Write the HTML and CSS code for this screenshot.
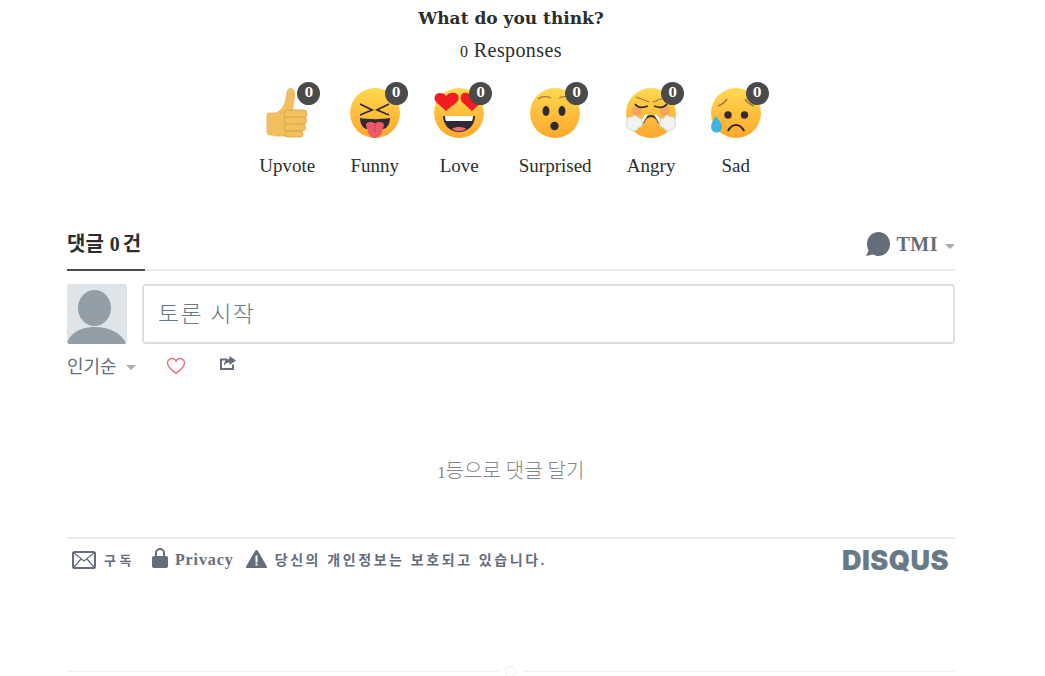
FILE: index.html
```html
<!DOCTYPE html>
<html lang="ko">
<head>
  <meta charset="UTF-8">
  <meta name="viewport" content="width=device-width, initial-scale=1.0">
  <title>Disqus</title>
  <link rel="stylesheet" href="styles.css">
</head>
<body>
  <div class="wrap">
    <h2 class="title">What do you think?</h2>
    <p class="responses"><span class="num">0</span> Responses</p>

    <ul class="reactions">
      <li class="reaction">
        <div class="emoji">
          <svg viewBox="0 0 50 50" width="50" height="50">
            <defs>
              <linearGradient id="face" x1="0" y1="0" x2="0" y2="1">
                <stop offset="0" stop-color="#ffd84f"/>
                <stop offset="1" stop-color="#fda72c"/>
              </linearGradient>
            </defs>
            <path d="M6 25h8c5-2 9-8 10-14l1-7c.5-3 2.500-4 4.500-3.500 2.500 1 3.500 3.500 3 7.500l-2 14-2 26H14c-2 0-3-1-4-1H8c-2 0-3-1-3-3V27c0-1 0-2 1-2z" fill="#f2bf5f" stroke="#e8b458" stroke-width=".8"/>
            <rect x="22" y="22" width="23" height="8" rx="3.500" fill="#f2bf5f" stroke="#d99f45" stroke-width=".8"/>
            <rect x="22" y="29" width="22.500" height="7.500" rx="3.500" fill="#f2bf5f" stroke="#d99f45" stroke-width=".8"/>
            <rect x="22" y="36" width="21.500" height="7" rx="3.500" fill="#f2bf5f" stroke="#d99f45" stroke-width=".8"/>
            <rect x="23" y="43" width="18" height="6" rx="3" fill="#f2bf5f" stroke="#d99f45" stroke-width=".8"/>
          </svg>
          <span class="badge">0</span>
        </div>
        <span class="label">Upvote</span>
      </li>
      <li class="reaction">
        <div class="emoji">
          <svg viewBox="0 0 50 50" width="50" height="50">
            <circle cx="25" cy="25" r="25" fill="url(#face)"/>
            <path d="M10 16l12 6-12 5M39 16l-12 6 12 5" fill="none" stroke="#2f2a33" stroke-width="1.800"/>
            <path d="M10 30c8 1.500 22 1.500 30 0 0 5-2 9-6 11H16c-4-2-6-6-6-11z" fill="#2f2a33"/>
            <path d="M16 37c0-2 2-3 4-3 2 0 4 .5 5 1.500 1-1 3-1.500 5-1.500 2 0 4 1 4 3l-2 7c-1 3.500-4 6-7 6s-6-2.500-7-6z" fill="#ef5a6a"/>
            <path d="M25 36v8" stroke="#c93f50" stroke-width="1"/>
          </svg>
          <span class="badge">0</span>
        </div>
        <span class="label">Funny</span>
      </li>
      <li class="reaction">
        <div class="emoji">
          <svg viewBox="0 0 50 50" width="50" height="50">
            <circle cx="25" cy="25" r="25" fill="url(#face)"/>
            <path d="M9 28h32c0 9-7 16-16 16S9 37 9 28z" fill="#2f2a33"/>
            <path d="M11 28h28c0 2-.5 4-1 5H12c-.5-1-1-3-1-5z" fill="#fff"/>
            <path d="M18 41c2-1.500 4-2 7-2s5 .5 7 2c-2 1.500-4 2-7 2s-5-.5-7-2z" fill="#ef6a6a"/>
            <path d="M12 23L2 14C-1 10 1 5 6 5c3 0 5 1 6 3 2-3 6-4 9-3 4 1 5 6 2 9z" fill="#f01d22"/>
            <path d="M38 23l10-9c2-4 0-9-5-9-3 0-5 1-6 3-2-3-5-4-7-3-4 1-4 6-2 9z" fill="#f01d22"/>
          </svg>
          <span class="badge">0</span>
        </div>
        <span class="label">Love</span>
      </li>
      <li class="reaction">
        <div class="emoji">
          <svg viewBox="0 0 50 50" width="50" height="50">
            <circle cx="25" cy="25" r="25" fill="url(#face)"/>
            <path d="M8 11c3-3 9-3 13-1M29 10c4-2 10-2 14 1" fill="none" stroke="#a8763a" stroke-width="1.300"/>
            <ellipse cx="16" cy="23" rx="3.500" ry="5" fill="#2f2a33"/>
            <ellipse cx="32" cy="23" rx="3.500" ry="5" fill="#2f2a33"/>
            <circle cx="24.500" cy="38" r="4.200" fill="#2f2a33"/>
          </svg>
          <span class="badge">0</span>
        </div>
        <span class="label">Surprised</span>
      </li>
      <li class="reaction">
        <div class="emoji">
          <svg viewBox="0 0 50 50" width="50" height="50">
            <circle cx="25" cy="25" r="25" fill="url(#face)"/>
            <circle cx="11" cy="23" r="5" fill="#f58f75" opacity=".6"/>
            <circle cx="39" cy="23" r="5" fill="#f58f75" opacity=".6"/>
            <path d="M10 9l13 5M40 9l-13 5" fill="none" stroke="#a8763a" stroke-width="1.300"/>
            <path d="M9 16c3 4 8 4 13 2M41 16c-3 4-8 4-13 2" fill="none" stroke="#2f2a33" stroke-width="1.800"/>
            <path d="M17 35c2-5 5-7 8-7s6 2 8 7" fill="none" stroke="#2f2a33" stroke-width="2"/>
            <path d="M13 34l7-8 1.500 1.500L17 35z" fill="#fff"/>
            <path d="M37 34l-7-8-1.500 1.500L33 35z" fill="#fff"/>
            <path d="M1 33c0-3 2-5 5-4 2-2 5-2 6 1 3 0 4 2 4 4 1 3-1 6-4 6-1 3-4 4-6 2-3 0-5-2-5-4-1-1-1-4 0-5z" fill="#f1f3f2" stroke="#b9d3d3" stroke-width=".8"/>
            <path d="M49 33c0-3-2-5-5-4-2-2-5-2-6 1-3 0-4 2-4 4-1 3 1 6 4 6 1 3 4 4 6 2 3 0 5-2 5-4 1-1 1-4 0-5z" fill="#f1f3f2" stroke="#b9d3d3" stroke-width=".8"/>
          </svg>
          <span class="badge">0</span>
        </div>
        <span class="label">Angry</span>
      </li>
      <li class="reaction">
        <div class="emoji">
          <svg viewBox="0 0 50 50" width="50" height="50">
            <circle cx="25" cy="25" r="25" fill="url(#face)"/>
            <path d="M7 18c3-1 7-4 9-7M43 18c-3-1-7-4-9-7" fill="none" stroke="#a8763a" stroke-width="1.500"/>
            <circle cx="17" cy="27" r="3.700" fill="#2f2a33"/>
            <circle cx="33.500" cy="27" r="3.700" fill="#2f2a33"/>
            <path d="M17 43c2-4 5-6 8-6s6 2 8 6" fill="none" stroke="#2f2a33" stroke-width="2.200"/>
            <path d="M5 28c3 4 6 8 6 11a5.500 5.500 0 0 1-11 0c0-3 2-7 5-11z" fill="#3cb4e0"/>
          </svg>
          <span class="badge">0</span>
        </div>
        <span class="label">Sad</span>
      </li>
    </ul>

    <div class="tabs">
      <span class="tab-active">댓글 <span class="num">0</span>건</span>
      <div class="community">
        <svg viewBox="0 0 24 24" width="24" height="24">
          <path d="M12.500 0C19 0 24 5.300 24 12s-5 12-11.500 12c-2.200 0-4-.6-5.500-1.500L0 24l2.600-5.500C1.500 16.700 1 14.500 1 12 1 5.300 6 0 12.500 0z" fill="#656c7a"/>
        </svg>
        <span class="tmi">TMI</span>
        <i class="caret"></i>
      </div>
    </div>

    <div class="composer">
      <div class="avatar">
        <svg viewBox="0 0 60 60" width="60" height="60">
          <ellipse cx="27.500" cy="24" rx="16.500" ry="18" fill="#939ea6"/>
          <path d="M0 60c2-11 14-17 28-17s27 6 31 17z" fill="#939ea6"/>
        </svg>
      </div>
      <div class="textbox">토론 시작</div>
    </div>

    <div class="sortbar">
      <span class="sort">인기순</span>
      <i class="caret"></i>
      <svg class="heart" viewBox="0 0 20 18" width="20" height="18">
        <path d="M10 16.500C4 12 1.500 9 1.500 6 1.500 3.500 3.500 1.500 6 1.500c1.700 0 3.200 1 4 2.500.8-1.500 2.300-2.500 4-2.500 2.500 0 4.500 2 4.500 4.500 0 3-2.500 6-8.500 10.500z" fill="none" stroke="#f0697a" stroke-width="1.400"/>
      </svg>
      <svg class="share" viewBox="0 0 16 14" width="16" height="14">
        <path d="M0 2.500h7v2H2v7.500h10V8.500h2V14H0z" fill="#656c7a"/>
        <path d="M9.500 0L16 4.500 9.500 9V6.500C7 6.500 5 7.500 4 10c0-4.500 2-7 5.500-7.300z" fill="#656c7a"/>
      </svg>
    </div>

    <p class="empty"><span class="num">1</span>등으로 댓글 달기</p>

    <div class="footer">
      <svg class="ic-mail" viewBox="0 0 24 18" width="24" height="18">
        <rect x="1" y="1" width="22" height="16" rx="1.500" fill="none" stroke="#656c7a" stroke-width="2"/>
        <path d="M2 2l10 8 10-8M2 16l7-8M22 16l-7-8" fill="none" stroke="#656c7a" stroke-width="1.200"/>
      </svg>
      <span class="f-text sub">구독</span>
      <svg class="ic-lock" viewBox="0 0 16 20" width="16" height="20">
        <path d="M3 9V5a5 5 0 0 1 10 0v4h-2V5a3 3 0 0 0-6 0v4z" fill="#656c7a"/>
        <rect x="0" y="8" width="16" height="12" rx="2" fill="#656c7a"/>
      </svg>
      <span class="f-text privacy">Privacy</span>
      <svg class="ic-warn" viewBox="0 0 21 18" width="21" height="18">
        <path d="M10.500 0c.6 0 1 .3 1.300.8l9 15.500c.5 1 0 1.700-1 1.700H1.200c-1 0-1.500-.7-1-1.700l9-15.500c.3-.5.700-.8 1.300-.8z" fill="#656c7a"/>
        <rect x="9.500" y="5.500" width="2" height="7" fill="#fff"/>
        <rect x="9.500" y="13.500" width="2" height="2" fill="#fff"/>
      </svg>
      <span class="f-text notice">당신의 개인정보는 보호되고 있습니다.</span>
      <span class="logo">DISQUS</span>
    </div>

    <div class="bottom">
      <span class="rule"></span>
      <span class="dot"></span>
      <span class="rule"></span>
    </div>
  </div>
</body>
</html>
```

FILE: styles.css
```css
html, body {
  margin: 0;
  padding: 0;
  height: 676px;
  overflow: hidden;
  background-color: white;
}

body {
  font-family: "Liberation Serif", "Noto Sans CJK KR", serif;
  color: #2a2e2e;
}

.wrap {
  width: 888px;
  margin-left: 67px;
}

.num {
  font-size: 0.8em;
}

.title {
  margin: 0;
  padding-top: 8px;
  height: 21px;
  line-height: 21px;
  font-family: "DejaVu Serif", serif;
  font-size: 17px;
  font-weight: bold;
  text-align: center;
}

.responses {
  margin: 0;
  padding-top: 10px;
  height: 22px;
  line-height: 22px;
  font-size: 20px;
  letter-spacing: 0.4px;
  text-align: center;
}

.reactions {
  display: flex;
  justify-content: center;
  gap: 34.5px;
  list-style: none;
  margin: 0;
  padding: 27px 2px 0 0;
}

.reaction {
  display: flex;
  flex-direction: column;
  align-items: center;
  min-width: 50px;
}

.emoji {
  position: relative;
  width: 50px;
  height: 50px;
}

.emoji svg {
  display: block;
  overflow: visible;
}

.badge {
  position: absolute;
  top: -6px;
  left: 35px;
  width: 23px;
  height: 23px;
  border-radius: 50%;
  background-color: #4a4a4a;
  color: white;
  font-family: "DejaVu Serif", serif;
  font-size: 12px;
  font-weight: bold;
  line-height: 23px;
  text-align: center;
}

.label {
  margin-top: 17px;
  line-height: 22px;
  font-size: 19px;
  white-space: nowrap;
}

.tabs {
  display: flex;
  justify-content: space-between;
  align-items: flex-end;
  margin-top: 46px;
  height: 46px;
  border-bottom: 2px solid #e7e9ee;
}

.tab-active {
  margin-bottom: -2px;
  padding: 0 4px 13px 0;
  line-height: 24px;
  font-size: 20px;
  font-weight: bold;
  border-bottom: 2px solid #4a4a4a;
}

.tab-active .num {
  font-size: 1em;
  margin: 0 3px 0 1px;
}

.community {
  display: flex;
  align-items: center;
  align-self: flex-start;
  gap: 7px;
  margin-top: 9px;
  color: #656c7a;
}

.tmi {
  font-size: 20px;
  font-weight: bold;
  letter-spacing: 0.5px;
}

.caret {
  display: inline-block;
  width: 0;
  height: 0;
  margin-top: 5px;
  border-left: 5px solid transparent;
  border-right: 5px solid transparent;
  border-top: 5px solid #aaaeb3;
}

.composer {
  display: flex;
  gap: 15px;
  margin-top: 13px;
}

.avatar {
  width: 60px;
  height: 60px;
  flex: none;
  background-color: #dfe4e8;
  border-radius: 3px;
  overflow: hidden;
}

.avatar svg {
  display: block;
}

.textbox {
  flex: 1;
  height: 56px;
  padding-left: 14px;
  border: 2px solid #dbdfe4;
  border-radius: 4px;
  line-height: 58px;
  font-size: 23px;
  font-weight: 300;
  letter-spacing: 1.4px;
  color: #687a86;
}

.sortbar {
  display: flex;
  align-items: center;
  margin-top: 8px;
  height: 26px;
  color: #656c7a;
}

.sort {
  font-size: 18px;
  margin-right: 9px;
}

.heart {
  margin-left: 30px;
  margin-top: 2px;
}

.share {
  margin-left: 34px;
  margin-top: -4px;
}

.empty {
  margin: 0;
  padding-top: 81px;
  height: 24px;
  line-height: 24px;
  font-size: 20px;
  font-weight: 300;
  color: #7f8489;
  text-align: center;
}

.footer {
  display: flex;
  align-items: center;
  margin-top: 54px;
  height: 42px;
  padding: 0 6px 0 5px;
  border-top: 2px solid #e7e9ee;
  color: #656c7a;
}

.f-text {
  font-size: 13px;
  font-weight: bold;
  white-space: nowrap;
}

.ic-mail {
  flex: none;
}

.sub {
  margin-left: 8px;
  margin-top: -2px;
  letter-spacing: 3.5px;
}

.ic-lock {
  flex: none;
  margin-left: 17px;
  margin-top: -4px;
}

.privacy {
  margin-left: 7px;
  font-size: 16px;
  letter-spacing: 0.9px;
}

.ic-warn {
  flex: none;
  margin-left: 12px;
  margin-top: -3px;
}

.notice {
  margin-left: 8px;
  margin-top: -3px;
  font-size: 14px;
  letter-spacing: 2.6px;
}

.logo {
  margin-left: auto;
  font-family: "Inter", "Liberation Sans", sans-serif;
  font-size: 27px;
  font-weight: 900;
  letter-spacing: 0.5px;
  color: #687a86;
}

.bottom {
  display: flex;
  align-items: center;
  margin-top: 84px;
  height: 12px;
}

.rule {
  flex: 1;
  height: 1px;
  background-color: #eef1f3;
}

.dot {
  width: 9px;
  height: 9px;
  margin: 0 8px 0 6px;
  border: 1px solid #e7edf1;
  border-radius: 50%;
}
```
